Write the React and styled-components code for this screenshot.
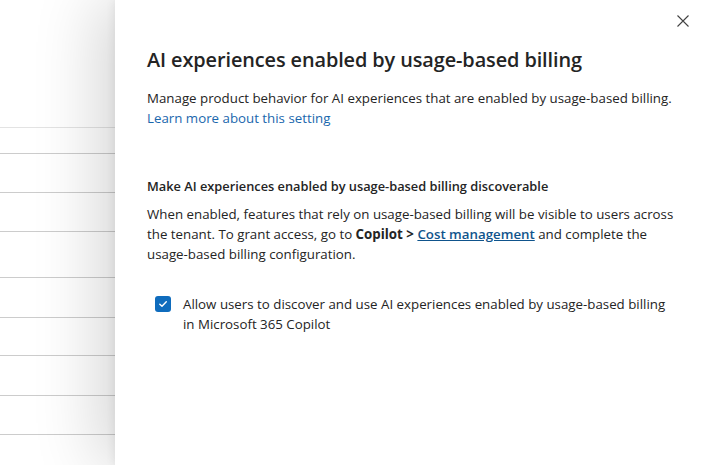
import React from "react";
import styled, { createGlobalStyle } from "styled-components";

const GlobalStyle = createGlobalStyle`
  html, body {
    margin: 0;
    padding: 0;
    background: #ffffff;
  }
  body {
    font-family: "Open Sans", "Noto Sans", sans-serif;
    color: #242424;
  }
`;

const Page = styled.div`
  display: flex;
  width: 706px;
  height: 465px;
  overflow: hidden;
  background: #ffffff;
`;

const Backdrop = styled.div`
  width: 115px;
  flex-shrink: 0;
  display: flex;
  flex-direction: column;
  padding-top: 127px;
`;

const BackRow = styled.div`
  height: ${(p) => p.h}px;
  flex-shrink: 0;
  border-top: 1px solid ${(p) => (p.light ? "#e3e3e3" : "#cccccc")};
`;

const Panel = styled.aside`
  position: relative;
  flex: 1;
  background: #ffffff;
  box-shadow: -18px 0 60px rgba(0, 0, 0, 0.16), -2px 0 8px rgba(0, 0, 0, 0.06);
  padding: 46px 20px 0 32px;
  z-index: 1;
`;

const CloseButton = styled.button`
  position: absolute;
  top: 11px;
  right: 13px;
  width: 20px;
  height: 20px;
  border: 0;
  padding: 0;
  background: transparent;
  display: flex;
  align-items: center;
  justify-content: center;
  cursor: pointer;
`;

const Title = styled.h2`
  margin: 0 0 14px;
  font-size: 19.9px;
  line-height: 28px;
  font-weight: 600;
  color: #242424;
  letter-spacing: -0.1px;
`;

const Text = styled.p`
  margin: 0;
  font-size: 13.3px;
  line-height: 20px;
  color: #242424;
  white-space: nowrap;
`;

const Link = styled.a`
  color: ${(p) => (p.strong ? "#0f548c" : "#1a67ad")};
  font-weight: ${(p) => (p.strong ? 600 : 400)};
  text-decoration: ${(p) => (p.strong ? "underline" : "none")};
  cursor: pointer;
`;

const Section = styled.section`
  margin-top: 48px;
`;

const SectionTitle = styled.h3`
  margin: 0 0 8px;
  font-size: 12.8px;
  line-height: 20px;
  font-weight: 600;
  color: #242424;
`;

const CheckRow = styled.label`
  display: flex;
  align-items: flex-start;
  gap: 12px;
  margin-top: 30px;
  padding-left: 8px;
  cursor: pointer;
`;

const Box = styled.span`
  flex-shrink: 0;
  width: 16px;
  height: 16px;
  margin-top: 2px;
  border-radius: 3px;
  background: #0f6cbd;
  display: flex;
  align-items: center;
  justify-content: center;
`;

const rows = [
  { h: 25, light: true },
  { h: 38 },
  { h: 38 },
  { h: 45 },
  { h: 39 },
  { h: 37 },
  { h: 39 },
  { h: 38 },
  { h: 38 },
];

export default function App() {
  return (
    <Page>
      <GlobalStyle />
      <Backdrop>
        {rows.map((r, i) => (
          <BackRow key={i} h={r.h} light={r.light} />
        ))}
      </Backdrop>
      <Panel>
        <CloseButton aria-label="Close">
          <svg width="12" height="12" viewBox="0 0 12 12">
            <path d="M0.5 0.5 L11.5 11.5 M11.5 0.5 L0.5 11.5" stroke="#424242" strokeWidth="1.1" />
          </svg>
        </CloseButton>
        <Title>AI experiences enabled by usage-based billing</Title>
        <Text>
          Manage product behavior for AI experiences that are enabled by usage-based billing.
          <br />
          <Link>Learn more about this setting</Link>
        </Text>
        <Section>
          <SectionTitle>Make AI experiences enabled by usage-based billing discoverable</SectionTitle>
          <Text>
            When enabled, features that rely on usage-based billing will be visible to users across
            <br />
            the tenant. To grant access, go to <b>Copilot &gt;</b> <Link strong>Cost management</Link> and
            complete the
            <br />
            usage-based billing configuration.
          </Text>
          <CheckRow>
            <Box>
              <svg width="10" height="10" viewBox="0 0 10 10">
                <path d="M1.8 5.2 L4 7.3 L8.3 2.8" stroke="#ffffff" strokeWidth="1.4" fill="none" strokeLinecap="round" strokeLinejoin="round" />
              </svg>
            </Box>
            <Text>
              Allow users to discover and use AI experiences enabled by usage-based billing
              <br />
              in Microsoft 365 Copilot
            </Text>
          </CheckRow>
        </Section>
      </Panel>
    </Page>
  );
}
